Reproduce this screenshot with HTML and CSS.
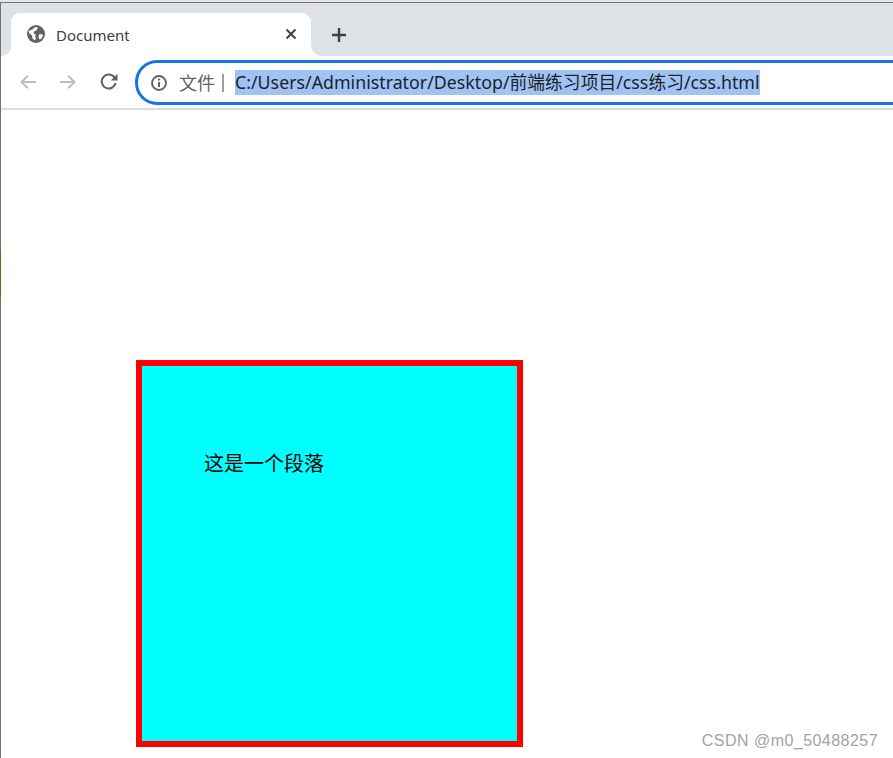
FILE: index.html
```html
<!DOCTYPE html>
<html lang="zh-CN">
<head>
<meta charset="utf-8">
<title>Document</title>
<link rel="stylesheet" href="styles.css">
</head>
<body>
<div class="window">
  <div class="edge"></div>
  <header class="browser">
    <div class="tabstrip">
      <div class="tab">
        <svg class="globe" width="18" height="18" viewBox="0 0 18 18"><circle cx="9" cy="9" r="9" fill="#5f6368"/><path d="M1.500 6 5.500 4.500 7.500 2.500 10.500 2 10.500 4 9 5.500 7 6.500 6.500 8.500 9 9.500 8 11 9 13 8 15.500 5.500 13.500 5 10.500 2.500 8.500ZM12 9.500 15 9 16 10.500 14.500 13.500 12.500 14.500 11.500 12Z" fill="#fff"/></svg>
        <span class="tab-title">Document</span>
        <svg class="tab-close" width="12" height="12" viewBox="0 0 12 12"><path d="M1.500 1.500 10.500 10.500M10.500 1.500 1.500 10.500" stroke="#3c4043" stroke-width="1.900" fill="none"/></svg>
      </div>
      <svg class="new-tab" width="16" height="16" viewBox="0 0 16 16"><path d="M8 1V15M1 8H15" stroke="#3c4043" stroke-width="2.400" fill="none"/></svg>
    </div>
    <div class="toolbar">
      <svg class="nav nav-back" width="16" height="14" viewBox="0 0 16 14"><path d="M16 7H1.500M7.800 .7 1.500 7l6.300 6.300" stroke="#bcbec1" stroke-width="2" fill="none"/></svg>
      <svg class="nav nav-forward" width="16" height="14" viewBox="0 0 16 14"><path d="M0 7H14.500M8.200 .7 14.500 7l-6.300 6.300" stroke="#bcbec1" stroke-width="2" fill="none"/></svg>
      <svg class="nav nav-reload" width="18" height="17" viewBox="0 0 18 17"><path d="M15.600 10A7 7 0 1 1 13.700 3.500L15.500 5.500" stroke="#5f6368" stroke-width="2.100" fill="none"/><path d="M17.500 .8V7.500H10.800Z" fill="#5f6368"/></svg>
      <div class="omnibox">
        <svg class="info" width="16" height="16" viewBox="0 0 16 16"><circle cx="8" cy="8" r="7" stroke="#5f6368" stroke-width="1.900" fill="none"/><path d="M8 7V12" stroke="#5f6368" stroke-width="2"/><circle cx="8" cy="4.700" r="1.100" fill="#5f6368"/></svg>
        <span class="scheme">文件</span>
        <span class="divider"></span>
        <span class="url">C:/Users/Administrator/Desktop/前端练习项目/css练习/css.html</span>
      </div>
    </div>
  </header>
  <main class="page">
    <div class="box">
      <p class="para">这是一个段落</p>
    </div>
  </main>
</div>
<div class="watermark">CSDN @m0_50488257</div>
</body>
</html>
```
FILE: styles.css
```css
html, body {
  margin: 0;
  padding: 0;
  height: 758px;
  overflow: hidden;
  background: #fff;
}
body {
  font-family: "Noto Sans", "Noto Sans CJK SC", sans-serif;
}
.window {
  height: 758px;
  box-sizing: border-box;
  padding-left: 1px;
  background: linear-gradient(to bottom, #707070 250px, #7f5f12 250px, #7f5f12 296px, #707070 296px) left top / 1px 100% no-repeat;
}
.edge {
  height: 2px;
  margin-left: -1px;
  background: #e6e6e6;
  border-bottom: 1px solid #777;
}
.tabstrip {
  height: 53px;
  background: #dee1e6;
  display: flex;
  align-items: flex-end;
  padding-left: 10px;
  box-sizing: border-box;
}
.tab {
  position: relative;
  width: 300px;
  height: 43px;
  box-sizing: border-box;
  background: #fff;
  border-radius: 9px 9px 0 0;
  display: flex;
  align-items: center;
  padding: 0 14px 0 16px;
}
.tab::before, .tab::after {
  content: "";
  position: absolute;
  bottom: 0;
  width: 11px;
  height: 11px;
}
.tab::before {
  left: -10px;
  width: 10px;
  background: radial-gradient(circle at 0 0, #dee1e6 10.500px, #fff 11px);
}
.tab::after {
  right: -11px;
  background: radial-gradient(circle at 100% 0, #dee1e6 10.500px, #fff 11px);
}
.globe {
  flex: none;
  margin-top: -1px;
}
.tab-title {
  margin-left: 11px;
  font-family: "Noto Sans", sans-serif;
  font-size: 15px;
  color: #3c4043;
  flex: 1;
}
.tab-close {
  flex: none;
  margin-top: -1px;
}
.new-tab {
  margin: 0 0 13px 20px;
}
.toolbar {
  height: 54px;
  box-sizing: border-box;
  border-bottom: 2px solid #dcdcdc;
  background: #fff;
  display: flex;
  align-items: center;
}
.nav {
  flex: none;
  margin-bottom: 1px;
}
.nav-back {
  margin-left: 19px;
}
.nav-forward {
  margin-left: 24px;
}
.nav-reload {
  margin-left: 24px;
}
.omnibox {
  flex: none;
  width: 800px;
  height: 45px;
  box-sizing: border-box;
  margin-left: 17px;
  margin-top: 1px;
  border: 3px solid #1a73e8;
  border-right: 0;
  border-radius: 22px 0 0 22px;
  display: flex;
  align-items: center;
  padding-left: 13px;
}
.info {
  flex: none;
}
.scheme {
  margin-left: 12px;
  font-size: 18px;
  line-height: 24px;
  color: #5f6368;
}
.divider {
  width: 2px;
  height: 18px;
  margin-left: 7px;
  background: #9a9da1;
}
.url {
  display: inline-block;
  margin-left: 11px;
  font-size: 17.800px;
  line-height: 25px;
  color: #202124;
  background: #a0c3f6;
  white-space: nowrap;
}
.page {
  padding: 250px 0 0 135px;
}
.box {
  width: 375px;
  height: 375px;
  border: 6px solid #f00;
  background: #0ff;
}
.para {
  margin: 0;
  padding: 82px 0 0 62px;
  font-family: "Noto Sans CJK SC", sans-serif;
  font-size: 20px;
  line-height: 30px;
  color: #000;
}
.watermark {
  position: absolute;
  right: 15px;
  top: 731px;
  font-family: "Liberation Sans", sans-serif;
  font-size: 16px;
  line-height: 20px;
  letter-spacing: 0.46px;
  color: #a3a3a3;
}
```
